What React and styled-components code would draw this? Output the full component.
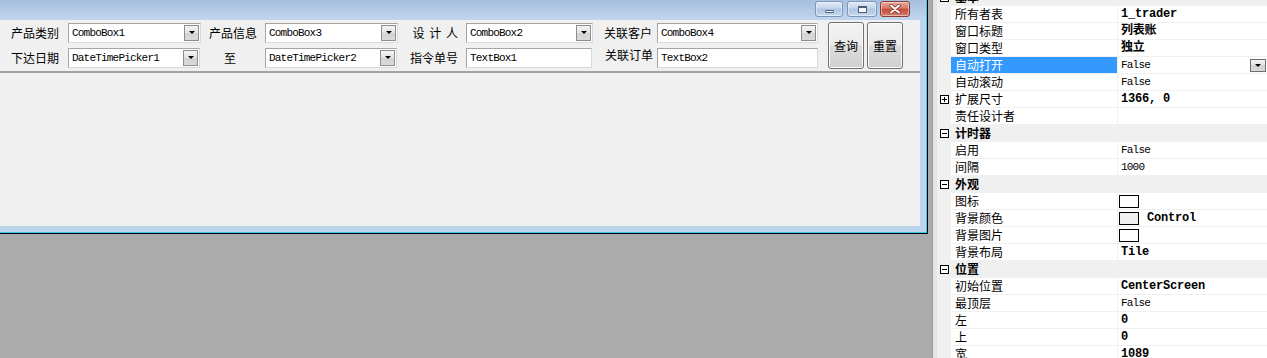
import React from "react";
import styled, { createGlobalStyle } from "styled-components";

const CJK = `"Noto Sans CJK SC", "Liberation Sans", sans-serif`;
const MONO = `"Liberation Mono", "Noto Sans CJK SC", monospace`;

const GlobalStyle = createGlobalStyle`
  html, body {
    margin: 0;
    padding: 0;
    overflow: hidden;
  }
  body {
    font-family: ${CJK};
  }
`;

const Screen = styled.div`
  display: flex;
  width: 1267px;
  height: 358px;
  overflow: hidden;
  background: #ababab;
`;

const Desktop = styled.div`
  flex: 0 0 932px;
  height: 100%;
`;

// window frame: black outer edge, cyan line, light blue border
const Window = styled.div`
  width: 928px;
  height: 234px;
  box-sizing: border-box;
  border-right: 1px solid #000;
  border-bottom: 1px solid #000;
`;

const Frame = styled.div`
  height: 100%;
  box-sizing: border-box;
  display: flex;
  flex-direction: column;
  border-right: 1px solid #3fc8ee;
  border-bottom: 1px solid #3fc8ee;
  background: #bcd4ec;
`;

const TitleBar = styled.div`
  flex: 0 0 20px;
  display: flex;
  justify-content: flex-end;
  align-items: flex-start;
  padding: 1px 16px 0 0;
  box-sizing: border-box;
  background: linear-gradient(#a6bfdc, #c1d6ee);
`;

const CaptionButton = styled.div`
  width: ${(p) => p.$w}px;
  height: 16px;
  margin-left: ${(p) => p.$ml || 0}px;
  box-sizing: border-box;
  border: 1px solid ${(p) => (p.$close ? "#8a3a33" : "#7d95b6")};
  border-radius: 3px;
  display: flex;
  align-items: center;
  justify-content: center;
  background: ${(p) =>
    p.$close
      ? "linear-gradient(#e9a99a, #d77a69 45%, #c44a3b 50%, #d5806c)"
      : "linear-gradient(#dfeaf7, #c3d6ec 45%, #adc5e2 50%, #c5d9ef)"};
  box-shadow: inset 0 0 0 1px rgba(255, 255, 255, 0.45);
`;

const MinGlyph = styled.span`
  width: 9px;
  height: 3px;
  margin-top: 5px;
  box-sizing: border-box;
  border: 1px solid #4b5d77;
  border-radius: 1px;
  background: #fff;
`;

const MaxGlyph = styled.span`
  width: 9px;
  height: 7px;
  box-sizing: border-box;
  border: 1px solid #4b5d77;
  border-top-width: 2px;
  background: #f4f8fc;
`;

const Client = styled.div`
  flex: 1;
  margin: 0 6px 6px 0;
  background: #f0f0f0;
  display: flex;
  flex-direction: column;
`;

const Toolbar = styled.div`
  display: grid;
  grid-template-columns: 68px 133px 64px 133px 68px 127px 64px 161px auto;
  grid-template-rows: 20px 20px;
  row-gap: 5px;
  height: 53px;
  box-sizing: border-box;
  padding-top: 3px;
  border-bottom: 2px solid #a3a3a3;
`;

const Label = styled.div`
  font: 12px/20px ${CJK};
  color: #000;
  white-space: nowrap;
  text-align: ${(p) => p.$align || "right"};
  padding-left: ${(p) => p.$pl || 0}px;
  padding-right: ${(p) => p.$pr || 0}px;
  margin-top: ${(p) => p.$shift || 0}px;
  word-spacing: ${(p) => (p.$spaced ? "2px" : "0")};
`;

const Field = styled.div`
  display: flex;
  align-items: center;
  width: ${(p) => p.$w}px;
  height: 20px;
  box-sizing: border-box;
  padding-left: 3px;
  background: #fff;
  border: 1px solid;
  border-color: #a5a5a5 #d9d9d9 #d9d9d9 #a5a5a5;
  font: 11px ${MONO};
  letter-spacing: -0.8px;
  color: #000;
  white-space: nowrap;
`;

const DropButton = styled.span`
  margin-left: auto;
  margin-right: 1px;
  flex: 0 0 auto;
  width: ${(p) => p.$w || 15}px;
  height: ${(p) => p.$h || 16}px;
  box-sizing: border-box;
  border: 1px solid ${(p) => p.$border || "#8d8d8d"};
  display: flex;
  justify-content: center;
  padding-top: ${(p) => p.$pt || 5}px;
  background: linear-gradient(#f4f4f4, #e3e3e3 50%, #d3d3d3 50%, #dadada);

  &::after {
    content: "";
    width: 0;
    height: 0;
    border-left: 3px solid transparent;
    border-right: 3px solid transparent;
    border-top: 3px solid #000;
  }
`;

const ButtonGroup = styled.div`
  grid-row: 1 / span 2;
  grid-column: 9;
  display: flex;
  gap: 3px;
  padding-left: 10px;
  margin-top: -1px;
  height: 47px;
`;

const PushButton = styled.button`
  width: 36px;
  height: 47px;
  padding: 0;
  box-sizing: border-box;
  border: 1px solid #707070;
  border-radius: 3px;
  background: linear-gradient(#f3f3f3, #ebebeb 50%, #dddddd 50%, #cfcfcf);
  box-shadow: inset 0 0 0 1px #fcfcfc;
  font: 12px ${CJK};
  color: #000;
`;

const ClientBody = styled.div`
  flex: 1;
`;

const Panel = styled.div`
  flex: 1;
  height: 100%;
  border-left: 1px solid #9a9a9a;
  padding-left: 4px;
  background: #e4e4e4;
  overflow: hidden;
`;

const Grid = styled.div`
  margin-top: -11px;
  background: #f0f0f0;
  display: flex;
  flex-direction: column;
`;

const Row = styled.div`
  display: grid;
  grid-template-columns: 14px 167px 1fr;
  height: 17px;
`;

const Gutter = styled.div`
  display: flex;
  align-items: flex-start;
  padding: 4px 0 0 3px;
`;

const Expander = styled.span`
  position: relative;
  width: 9px;
  height: 9px;
  box-sizing: border-box;
  border: 1px solid #000;
  background: #fff;

  &::before {
    content: "";
    position: absolute;
    left: 1px;
    top: 3px;
    width: 5px;
    height: 1px;
    background: #000;
  }
  &::after {
    content: "";
    display: ${(p) => (p.$open ? "none" : "block")};
    position: absolute;
    left: 3px;
    top: 1px;
    width: 1px;
    height: 5px;
    background: #000;
  }
`;

const Category = styled.div`
  grid-column: 2 / span 2;
  padding-left: 4px;
  font: bold 12px/16px ${CJK};
  color: #000;
`;

const Name = styled.div`
  height: 16px;
  margin-right: 1px;
  padding-left: 4px;
  font: 12px/16px ${CJK};
  color: ${(p) => (p.$selected ? "#fff" : "#000")};
  background: ${(p) => (p.$selected ? "#3399ff" : "#fff")};
  white-space: nowrap;
`;

const Value = styled.div`
  height: 16px;
  padding-left: 3px;
  display: flex;
  align-items: center;
  background: #fff;
  white-space: nowrap;
`;

const ValueText = styled.span`
  font-family: ${MONO};
  font-size: ${(p) => (p.$bold ? 12 : 11)}px;
  font-weight: ${(p) => (p.$bold ? "bold" : "normal")};
  letter-spacing: ${(p) => (p.$bold ? "-0.2px" : "-0.8px")};
  line-height: 16px;
  color: #000;
  margin-left: ${(p) => p.$ml || 0}px;
`;

const Swatch = styled.span`
  width: 20px;
  height: 13px;
  margin-left: -2px;
  box-sizing: border-box;
  border: 1px solid #000;
  background: ${(p) => p.$color};
`;

const CloseGlyph = () => (
  <svg width="12" height="10" viewBox="0 0 12 10">
    <path d="M2 1.5 L10 8.5 M10 1.5 L2 8.5" stroke="#7a2a22" strokeWidth="3.4" strokeLinecap="round" />
    <path d="M2 1.5 L10 8.5 M10 1.5 L2 8.5" stroke="#fff" strokeWidth="2" strokeLinecap="round" />
  </svg>
);

const rows = [
  { cat: "基本" },
  { name: "所有者表", value: "1_trader", bold: true },
  { name: "窗口标题", value: "列表账", bold: true },
  { name: "窗口类型", value: "独立", bold: true },
  { name: "自动打开", value: "False", selected: true },
  { name: "自动滚动", value: "False" },
  { name: "扩展尺寸", value: "1366, 0", bold: true, expand: true },
  { name: "责任设计者", value: "" },
  { cat: "计时器" },
  { name: "启用", value: "False" },
  { name: "间隔", value: "1000" },
  { cat: "外观" },
  { name: "图标", swatch: "#fff" },
  { name: "背景颜色", swatch: "#f0f0f0", value: "Control", bold: true },
  { name: "背景图片", swatch: "#fff" },
  { name: "背景布局", value: "Tile", bold: true },
  { cat: "位置" },
  { name: "初始位置", value: "CenterScreen", bold: true },
  { name: "最顶层", value: "False" },
  { name: "左", value: "0", bold: true },
  { name: "上", value: "0", bold: true },
  { name: "宽", value: "1089", bold: true },
];

const PropertyRow = ({ row }) => {
  if (row.cat) {
    return (
      <Row>
        <Gutter>
          <Expander $open />
        </Gutter>
        <Category>{row.cat}</Category>
      </Row>
    );
  }
  return (
    <Row>
      <Gutter>{row.expand && <Expander />}</Gutter>
      <Name $selected={row.selected}>{row.name}</Name>
      <Value>
        {row.swatch && <Swatch $color={row.swatch} />}
        {row.value && (
          <ValueText $bold={row.bold} $ml={row.swatch ? 8 : 0}>
            {row.value}
          </ValueText>
        )}
        {row.selected && <DropButton $w={16} $h={13} $pt={4} $border="#6d6d6d" />}
      </Value>
    </Row>
  );
};

const App = () => {
  return (
    <>
      <GlobalStyle />
      <Screen>
        <Desktop>
          <Window>
            <Frame>
              <TitleBar>
                <CaptionButton $w={28}>
                  <MinGlyph />
                </CaptionButton>
                <CaptionButton $w={30} $ml={4}>
                  <MaxGlyph />
                </CaptionButton>
                <CaptionButton $w={30} $ml={3} $close>
                  <CloseGlyph />
                </CaptionButton>
              </TitleBar>
              <Client>
                <Toolbar>
                  <Label $align="left" $pl={11}>产品类别</Label>
                  <Field $w={133}>
                    ComboBox1
                    <DropButton />
                  </Field>
                  <Label $align="center">产品信息</Label>
                  <Field $w={133}>
                    ComboBox3
                    <DropButton />
                  </Field>
                  <Label $pr={8} $spaced>设 计 人</Label>
                  <Field $w={127}>
                    ComboBox2
                    <DropButton />
                  </Field>
                  <Label $pr={5}>关联客户</Label>
                  <Field $w={161}>
                    ComboBox4
                    <DropButton />
                  </Field>
                  <ButtonGroup>
                    <PushButton>查询</PushButton>
                    <PushButton>重置</PushButton>
                  </ButtonGroup>

                  <Label $align="left" $pl={11}>下达日期</Label>
                  <Field $w={132}>
                    DateTimePicker1
                    <DropButton />
                  </Field>
                  <Label $align="center" $pr={6}>至</Label>
                  <Field $w={132}>
                    DateTimePicker2
                    <DropButton />
                  </Field>
                  <Label $pr={8}>指令单号</Label>
                  <Field $w={126}>TextBox1</Field>
                  <Label $pr={4} $shift={-3}>关联订单</Label>
                  <Field $w={161}>TextBox2</Field>
                </Toolbar>
                <ClientBody />
              </Client>
            </Frame>
          </Window>
        </Desktop>
        <Panel>
          <Grid>
            {rows.map((row, i) => (
              <PropertyRow key={i} row={row} />
            ))}
          </Grid>
        </Panel>
      </Screen>
    </>
  );
};

export default App;
